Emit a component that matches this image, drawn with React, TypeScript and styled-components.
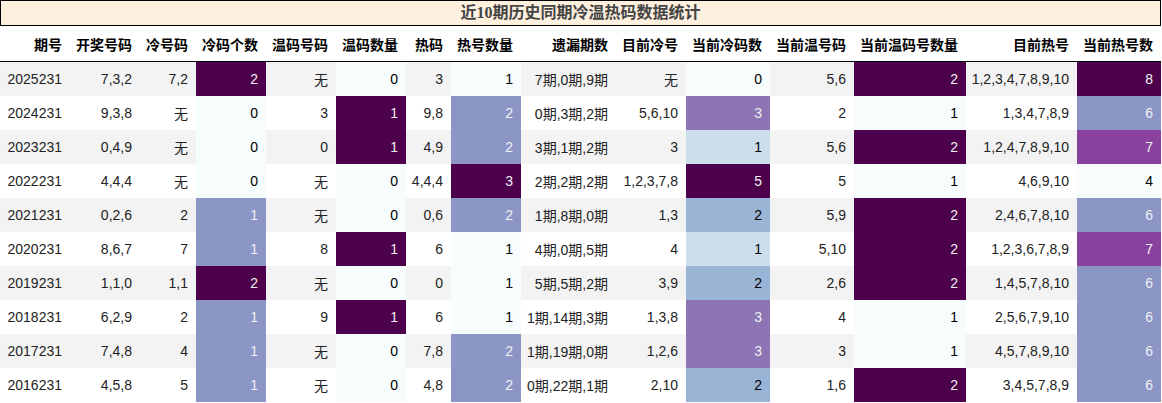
import React from "react";
import styled, { createGlobalStyle } from "styled-components";

const GlobalStyle = createGlobalStyle`
  body {
    margin: 0;
    background: #ffffff;
  }
`;

// BuPu colormap stops
const BUPU = [
  "#f7fcfd",
  "#e0ecf4",
  "#bfd3e6",
  "#9ebcda",
  "#8c96c6",
  "#8c6bb1",
  "#88419d",
  "#810f7c",
  "#4d004b",
];

const hexToRgb = (hex: string) => [
  parseInt(hex.slice(1, 3), 16),
  parseInt(hex.slice(3, 5), 16),
  parseInt(hex.slice(5, 7), 16),
];

function gradient(t: number) {
  const pos = Math.max(0, Math.min(1, t)) * (BUPU.length - 1);
  const i = Math.min(Math.floor(pos), BUPU.length - 2);
  const f = pos - i;
  const a = hexToRgb(BUPU[i]);
  const b = hexToRgb(BUPU[i + 1]);
  const rgb = a.map((v, k) => Math.round(v + (b[k] - v) * f));
  const lum = rgb
    .map((v) => {
      const c = v / 255;
      return c <= 0.03928 ? c / 12.92 : Math.pow((c + 0.055) / 1.055, 2.4);
    })
    .reduce((s, c, k) => s + c * [0.2126, 0.7152, 0.0722][k], 0);
  return {
    bg: `rgb(${rgb.join(",")})`,
    fg: lum < 0.408 ? "#f1f1f1" : "#000000",
  };
}

const Wrapper = styled.div`
  width: 1161px;
  font-family: "Liberation Sans", "Noto Sans CJK SC", sans-serif;
  color: #222;
`;

const Title = styled.div`
  height: 24px;
  border: 1px solid #000;
  background-color: #fef0df;
  color: #444;
  font-family: "Liberation Serif", "Noto Sans CJK SC", serif;
  font-weight: bold;
  font-size: 16px;
  line-height: 24px;
  text-align: center;
`;

const Table = styled.table`
  width: 1161px;
  border-collapse: collapse;
  table-layout: fixed;
  font-size: 14px;
`;

const HeadCell = styled.th`
  height: 35px;
  padding: 0 8px 0 0;
  text-align: right;
  font-weight: bold;
  color: #000;
  border-bottom: 1px solid #000;
  white-space: nowrap;
`;

const Row = styled.tr<{ $striped: boolean }>`
  background-color: ${(p) => (p.$striped ? "#f3f3f3" : "#ffffff")};
`;

const Cell = styled.td<{ $bg?: string; $fg?: string }>`
  height: 34px;
  padding: 0 8px 0 0;
  text-align: right;
  white-space: nowrap;
  background-color: ${(p) => p.$bg ?? "transparent"};
  color: ${(p) => p.$fg ?? "#222"};
`;

interface IColumn {
  title: string;
  width: number;
  gradient?: boolean;
}

const columns: IColumn[] = [
  { title: "期号", width: 70 },
  { title: "开奖号码", width: 70 },
  { title: "冷号码", width: 56 },
  { title: "冷码个数", width: 70, gradient: true },
  { title: "温码号码", width: 70 },
  { title: "温码数量", width: 70, gradient: true },
  { title: "热码", width: 45 },
  { title: "热号数量", width: 70, gradient: true },
  { title: "遗漏期数", width: 95 },
  { title: "目前冷号", width: 70 },
  { title: "当前冷码数", width: 84, gradient: true },
  { title: "当前温号码", width: 84 },
  { title: "当前温码号数量", width: 112, gradient: true },
  { title: "目前热号", width: 111 },
  { title: "当前热号数", width: 84, gradient: true },
];

const rows: string[][] = [
  ["2025231", "7,3,2", "7,2", "2", "无", "0", "3", "1", "7期,0期,9期", "无", "0", "5,6", "2", "1,2,3,4,7,8,9,10", "8"],
  ["2024231", "9,3,8", "无", "0", "3", "1", "9,8", "2", "0期,3期,2期", "5,6,10", "3", "2", "1", "1,3,4,7,8,9", "6"],
  ["2023231", "0,4,9", "无", "0", "0", "1", "4,9", "2", "3期,1期,2期", "3", "1", "5,6", "2", "1,2,4,7,8,9,10", "7"],
  ["2022231", "4,4,4", "无", "0", "无", "0", "4,4,4", "3", "2期,2期,2期", "1,2,3,7,8", "5", "5", "1", "4,6,9,10", "4"],
  ["2021231", "0,2,6", "2", "1", "无", "0", "0,6", "2", "1期,8期,0期", "1,3", "2", "5,9", "2", "2,4,6,7,8,10", "6"],
  ["2020231", "8,6,7", "7", "1", "8", "1", "6", "1", "4期,0期,5期", "4", "1", "5,10", "2", "1,2,3,6,7,8,9", "7"],
  ["2019231", "1,1,0", "1,1", "2", "无", "0", "0", "1", "5期,5期,2期", "3,9", "2", "2,6", "2", "1,4,5,7,8,10", "6"],
  ["2018231", "6,2,9", "2", "1", "9", "1", "6", "1", "1期,14期,3期", "1,3,8", "3", "4", "1", "2,5,6,7,9,10", "6"],
  ["2017231", "7,4,8", "4", "1", "无", "0", "7,8", "2", "1期,19期,0期", "1,2,6", "3", "3", "1", "4,5,7,8,9,10", "6"],
  ["2016231", "4,5,8", "5", "1", "无", "0", "4,8", "2", "0期,22期,1期", "2,10", "2", "1,6", "2", "3,4,5,7,8,9", "6"],
];

// min / max of each gradient column
const ranges = columns.map((col, ci) => {
  if (!col.gradient) return null;
  const vals = rows.map((r) => Number(r[ci]));
  return { min: Math.min(...vals), max: Math.max(...vals) };
});

export default function App() {
  return (
    <>
      <GlobalStyle />
      <Wrapper>
        <Title>近10期历史同期冷温热码数据统计</Title>
        <Table>
          <colgroup>
            {columns.map((col) => (
              <col key={col.title} style={{ width: col.width }} />
            ))}
          </colgroup>
          <thead>
            <tr>
              {columns.map((col) => (
                <HeadCell key={col.title}>{col.title}</HeadCell>
              ))}
            </tr>
          </thead>
          <tbody>
            {rows.map((row, ri) => (
              <Row key={row[0]} $striped={ri % 2 === 0}>
                {row.map((value, ci) => {
                  const range = ranges[ci];
                  if (!range) return <Cell key={ci}>{value}</Cell>;
                  const t =
                    range.max === range.min
                      ? 0
                      : (Number(value) - range.min) / (range.max - range.min);
                  const c = gradient(t);
                  return (
                    <Cell key={ci} $bg={c.bg} $fg={c.fg}>
                      {value}
                    </Cell>
                  );
                })}
              </Row>
            ))}
          </tbody>
        </Table>
      </Wrapper>
    </>
  );
}
